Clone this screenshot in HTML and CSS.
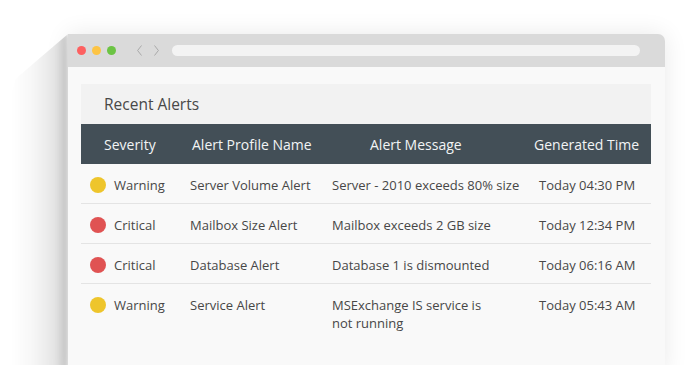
FILE: index.html
```html
<!DOCTYPE html>
<html lang="en">

<head>
    <meta charset="UTF-8">
    <meta name="viewport" content="width=device-width, initial-scale=1.0">
    <title>Recent Alerts</title>
    <link rel="stylesheet" href="styles.css">
</head>

<body>
    <div class="stage">
        <div class="window">
            <div class="titlebar">
                <span class="dot red"></span>
                <span class="dot yellow"></span>
                <span class="dot green"></span>
                <span class="nav">
                    <svg width="5" height="11" viewBox="0 0 5 11"><path d="M4.5 0.5 L0.6 5.5 L4.5 10.5" fill="none" stroke="#a9a9a9" stroke-width="1"/></svg>
                    <svg width="5" height="11" viewBox="0 0 5 11"><path d="M0.5 0.5 L4.4 5.5 L0.5 10.5" fill="none" stroke="#a9a9a9" stroke-width="1"/></svg>
                </span>
                <span class="address"></span>
            </div>
            <div class="content">
                <div class="panel">
                    <h2 class="panel-title">Recent Alerts</h2>
                    <div class="table-head">
                        <span>Severity</span>
                        <span>Alert Profile Name</span>
                        <span>Alert Message</span>
                        <span>Generated Time</span>
                    </div>
                    <div class="row">
                        <span class="severity"><i class="status warning"></i>Warning</span>
                        <span>Server Volume Alert</span>
                        <span>Server - 2010 exceeds 80% size</span>
                        <span>Today 04:30 PM</span>
                    </div>
                    <div class="row">
                        <span class="severity"><i class="status critical"></i>Critical</span>
                        <span>Mailbox Size Alert</span>
                        <span>Mailbox exceeds 2 GB size</span>
                        <span>Today 12:34 PM</span>
                    </div>
                    <div class="row">
                        <span class="severity"><i class="status critical"></i>Critical</span>
                        <span>Database Alert</span>
                        <span>Database 1 is dismounted</span>
                        <span>Today 06:16 AM</span>
                    </div>
                    <div class="row last">
                        <span class="severity"><i class="status warning"></i>Warning</span>
                        <span>Service Alert</span>
                        <span>MSExchange IS service is<br>not running</span>
                        <span>Today 05:43 AM</span>
                    </div>
                </div>
            </div>
        </div>
    </div>
</body>

</html>
```

FILE: styles.css
```css
* {
    margin: 0;
    padding: 0;
    box-sizing: border-box;
    font-family: 'Open Sans', sans-serif;
}

body {
    background: #fff;
    width: 694px;
    height: 365px;
    overflow: hidden;
}

.stage {
    padding: 34px 0 0 68px;
}

.window {
    position: relative;
    width: 597px;
    height: 340px;
    background: #f9f9f9;
    border-radius: 0 7px 0 0;
    box-shadow: 0 0 24px rgba(0, 0, 0, 0.09);
}

/* long shadow falling to the left */
.window::before {
    content: '';
    position: absolute;
    top: 0;
    right: 100%;
    width: 60px;
    height: 340px;
    background: linear-gradient(to left, rgba(0, 0, 0, 0.22), rgba(0, 0, 0, 0.1) 20%, rgba(0, 0, 0, 0.03) 60%, rgba(0, 0, 0, 0) 95%);
    clip-path: polygon(100% 0, 12% 45px, 0 70px, 0 100%, 100% 100%);
    filter: blur(2px);
}

.titlebar {
    display: flex;
    align-items: center;
    height: 33px;
    padding-left: 9px;
    background: #dadada;
    border-radius: 0 7px 0 0;
}

.dot {
    width: 9px;
    height: 9px;
    border-radius: 50%;
    margin-right: 6px;
}

.dot.red {
    background: #fd6060;
}

.dot.yellow {
    background: #fdc444;
}

.dot.green {
    background: #6cc444;
}

.nav {
    display: flex;
    gap: 12px;
    margin-left: 15px;
}

.address {
    flex: 1;
    height: 11px;
    margin: 0 25px 0 13px;
    border-radius: 6px;
    background: #f3f3f3;
}

.content {
    padding: 17px 14px 0 13px;
}

.panel-title {
    height: 40px;
    padding-left: 23px;
    background: #f2f2f2;
    color: #484848;
    font-size: 15.5px;
    font-weight: 400;
    line-height: 40px;
}

.table-head {
    display: grid;
    grid-template-columns: 88px 178px 164px 1fr;
    height: 40px;
    padding-left: 23px;
    align-items: center;
    background: #434f57;
    color: #f2f4f5;
    font-size: 14px;
}

.row {
    display: grid;
    grid-template-columns: 100px 142px 207px 1fr;
    padding: 12px 0 9px 9px;
    border-bottom: 1px solid #e4e4e4;
    color: #474747;
    font-size: 13px;
    line-height: 18px;
}

.row.last {
    border-bottom: none;
}

.severity {
    display: flex;
    align-items: center;
    height: 18px;
}

.status {
    width: 16px;
    height: 16px;
    border-radius: 50%;
    margin-right: 8px;
}

.status.warning {
    background: #eec52c;
}

.status.critical {
    background: #e05353;
}
```
